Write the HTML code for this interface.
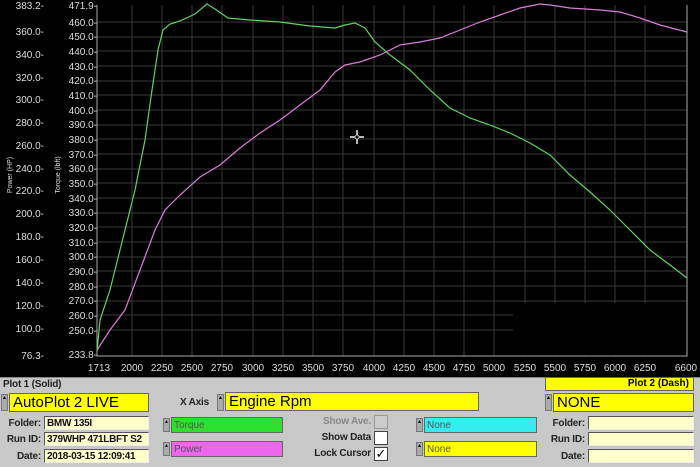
<html><head><style>
body{margin:0;width:700px;height:466px;background:#000;overflow:hidden;font-family:"Liberation Sans",Arial,sans-serif}
.p{position:absolute;left:0;top:377px;width:700px;height:89px;background:#c8c8c8;border-top:1px solid #888}
.a{position:absolute;font-size:10px;font-weight:bold;color:#222;white-space:nowrap;text-align:right;letter-spacing:-0.2px}
.f{position:absolute;background:#ffffcc;border:1px solid #555;border-right-color:#eee;border-bottom-color:#eee;font-size:10px;font-weight:bold;color:#111;height:14px;line-height:13px;padding-left:2px;box-sizing:border-box;white-space:nowrap;overflow:hidden;letter-spacing:-0.3px}
.y{position:absolute;background:#ffff00;border:1px solid #666;font-size:15px;height:19px;line-height:18px;box-sizing:border-box;padding-left:3px;white-space:nowrap}
.s{position:absolute;width:7px;background:#aaa;border:1px solid #777;box-sizing:border-box;font-size:5px;line-height:7px;text-align:center;overflow:hidden}
.c{position:absolute;font-size:10px;height:16px;line-height:15px;border:1px solid #666;box-sizing:border-box;padding-left:2px;color:#555}
.cb{position:absolute;width:14px;height:14px;background:#fff;border:1px solid #444;box-sizing:border-box;font-size:13px;line-height:12px;text-align:center}
</style></head><body>
<svg width="700" height="377" style="position:absolute;left:0;top:0" font-family="Liberation Sans, Arial, sans-serif">
<g stroke="#3a3a3a" stroke-width="1">
<path d="M132 5V356M162 5V356M192 5V356M222 5V356M253 5V356M283 5V356M313 5V356M343 5V356M374 5V356M404 5V356M434 5V356M464 5V356M494 5V356M525 5V356M555 5V356M585 5V356M615 5V356M645 5V356"/>
<path d="M97 22H687M97 37H687M97 51H687M97 66H687M97 81H687M97 95H687M97 110H687M97 125H687M97 139H687M97 154H687M97 169H687M97 183H687M97 198H687M97 213H687M97 227H687M97 242H687M97 257H687M97 271H687M97 286H687M97 301H687M97 315H687M97 330H687"/>
</g>
<rect x="513" y="303" width="174" height="52" fill="#000"/>
<path d="M97 5V356H687V5" stroke="#aaa" fill="none"/>
<g fill="#ddd" font-size="10" text-anchor="end">
<text x="44" y="9">383.2-</text><text x="44" y="35">360.0-</text><text x="44" y="58">340.0-</text><text x="44" y="81">320.0-</text><text x="44" y="103">300.0-</text><text x="44" y="126">280.0-</text><text x="44" y="149">260.0-</text><text x="44" y="172">240.0-</text><text x="44" y="194">220.0-</text><text x="44" y="217">200.0-</text><text x="44" y="240">180.0-</text><text x="44" y="263">160.0-</text><text x="44" y="286">140.0-</text><text x="44" y="309">120.0-</text><text x="44" y="332">100.0-</text><text x="44" y="359">76.3-</text>
<text x="97" y="9">471.9-</text><text x="97" y="26">460.0-</text><text x="97" y="40">450.0-</text><text x="97" y="55">440.0-</text><text x="97" y="70">430.0-</text><text x="97" y="84">420.0-</text><text x="97" y="99">410.0-</text><text x="97" y="114">400.0-</text><text x="97" y="128">390.0-</text><text x="97" y="143">380.0-</text><text x="97" y="158">370.0-</text><text x="97" y="172">360.0-</text><text x="97" y="187">350.0-</text><text x="97" y="202">340.0-</text><text x="97" y="216">330.0-</text><text x="97" y="231">320.0-</text><text x="97" y="246">310.0-</text><text x="97" y="260">300.0-</text><text x="97" y="275">290.0-</text><text x="97" y="290">280.0-</text><text x="97" y="304">270.0-</text><text x="97" y="319">260.0-</text><text x="97" y="334">250.0-</text><text x="97" y="358">233.8-</text>
</g>
<g fill="#ddd" font-size="10" text-anchor="middle">
<text x="99" y="371">1713</text><text x="132" y="371">2000</text><text x="162" y="371">2250</text><text x="192" y="371">2500</text><text x="222" y="371">2750</text><text x="253" y="371">3000</text><text x="283" y="371">3250</text><text x="313" y="371">3500</text><text x="343" y="371">3750</text><text x="374" y="371">4000</text><text x="404" y="371">4250</text><text x="434" y="371">4500</text><text x="464" y="371">4750</text><text x="494" y="371">5000</text><text x="525" y="371">5250</text><text x="555" y="371">5500</text><text x="585" y="371">5750</text><text x="615" y="371">6000</text><text x="645" y="371">6250</text><text x="686" y="371">6600</text>
</g>
<text transform="translate(12,175) rotate(-90)" fill="#ddd" font-size="7" text-anchor="middle">Power (HP)</text>
<text transform="translate(60,175) rotate(-90)" fill="#ddd" font-size="7" text-anchor="middle">Torque (lbft)</text>
<polyline fill="none" stroke="#5fd35f" stroke-width="1.2" points="97,352 100,320 110,290 120,250 135,190 145,140 152,90 158,50 163,30 170,24 180,21 195,14 207,4 215,9 228,18 250,20 280,22 310,26 335,28 345,25 355,23 365,28 375,42 390,55 410,70 430,90 450,108 470,118 490,125 510,133 530,143 550,155 570,175 590,192 610,210 630,230 650,250 670,265 687,278"/>
<polyline fill="none" stroke="#d87ed8" stroke-width="1.2" points="97,350 110,330 125,310 140,270 155,230 165,210 180,195 200,177 220,165 240,148 260,133 280,120 300,105 320,90 335,72 345,65 360,62 380,55 400,45 420,42 440,38 460,30 480,22 500,15 520,8 540,4 550,5 570,8 600,10 620,12 640,18 660,25 687,32"/>
<path d="M350 137H364M357 130V144" stroke="#bbb" stroke-width="2"/><circle cx="357" cy="137" r="2" fill="#000" stroke="#bbb"/>
</svg>
<div class="p"></div>
<div class="a" style="left:3px;top:379px">Plot 1 (Solid)</div>
<div class="s" style="left:1px;top:394px;height:17px">▲▼</div>
<div class="y" style="left:9px;top:393px;width:140px">AutoPlot 2 LIVE</div>
<div class="a" style="left:180px;top:397px">X Axis</div>
<div class="s" style="left:217px;top:394px;height:17px">▲▼</div>
<div class="y" style="left:225px;top:392px;width:254px">Engine Rpm</div>
<div class="a" style="left:0;width:41px;top:418px">Folder:</div><div class="f" style="left:44px;top:416px;width:105px">BMW 135I</div>
<div class="a" style="left:0;width:41px;top:434px">Run ID:</div><div class="f" style="left:44px;top:432px;width:105px">379WHP 471LBFT S2</div>
<div class="a" style="left:0;width:41px;top:451px">Date:</div><div class="f" style="left:44px;top:449px;width:105px">2018-03-15 12:09:41</div>
<div class="s" style="left:163px;top:418px;height:14px">▲▼</div><div class="c" style="left:171px;top:417px;width:112px;background:#2ee02e">Torque</div>
<div class="s" style="left:163px;top:442px;height:14px">▲▼</div><div class="c" style="left:171px;top:441px;width:112px;background:#ee66ee">Power</div>
<div class="a" style="left:300px;width:71px;top:416px;color:#888">Show Ave.</div><div class="cb" style="left:374px;top:415px;background:#ccc;border-color:#999"></div>
<div class="a" style="left:300px;width:71px;top:432px">Show Data</div><div class="cb" style="left:374px;top:431px"></div>
<div class="a" style="left:300px;width:71px;top:448px">Lock Cursor</div><div class="cb" style="left:374px;top:447px">✓</div>
<div class="s" style="left:416px;top:418px;height:14px">▲▼</div><div class="c" style="left:424px;top:417px;width:113px;background:#33eeee">None</div>
<div class="s" style="left:416px;top:442px;height:14px">▲▼</div><div class="c" style="left:424px;top:441px;width:113px;background:#ffff00">None</div>
<div class="y" style="left:545px;top:377px;width:149px;height:14px;font-size:10px;font-weight:bold;line-height:12px;text-align:right;padding-right:4px">Plot 2 (Dash)</div>
<div class="s" style="left:545px;top:394px;height:17px">▲▼</div>
<div class="y" style="left:553px;top:393px;width:141px">NONE</div>
<div class="a" style="left:545px;width:40px;top:418px">Folder:</div><div class="f" style="left:588px;top:416px;width:106px"></div>
<div class="a" style="left:545px;width:40px;top:434px">Run ID:</div><div class="f" style="left:588px;top:432px;width:106px"></div>
<div class="a" style="left:545px;width:40px;top:451px">Date:</div><div class="f" style="left:588px;top:449px;width:106px"></div>
</body></html>
